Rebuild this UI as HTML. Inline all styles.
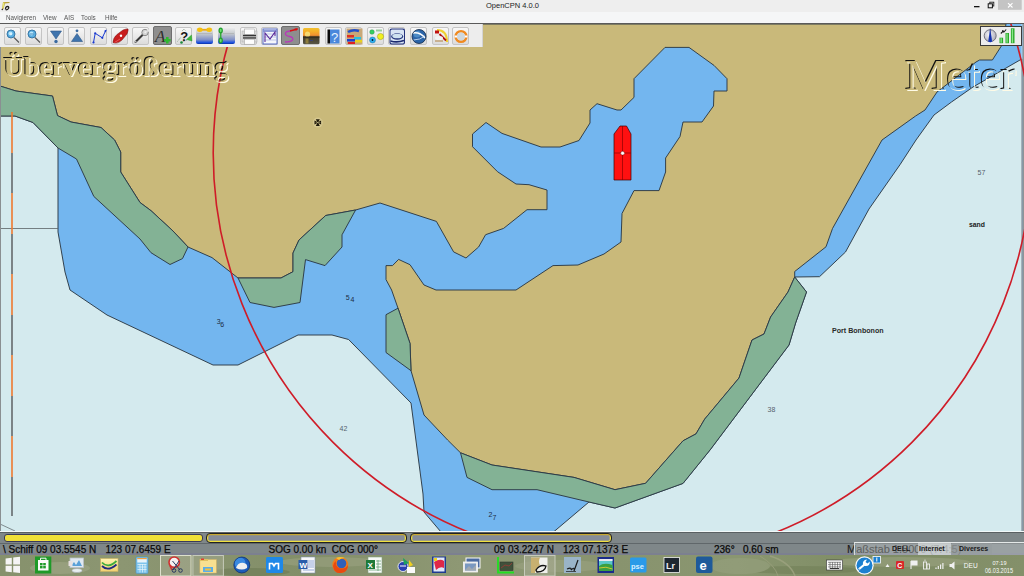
<!DOCTYPE html>
<html><head><meta charset="utf-8">
<style>
html,body{margin:0;padding:0;width:1024px;height:576px;overflow:hidden;background:#c9b97a;font-family:"Liberation Sans",sans-serif;}
#title{position:absolute;left:0;top:0;width:1024px;height:12px;background:#eeeeee;}
#title .t{position:absolute;left:486px;top:1px;font-size:7.5px;line-height:10px;color:#222;}
#menu{position:absolute;left:0;top:12px;width:1024px;height:11px;background:#f5f6f7;border-bottom:1px solid #5a5a5a;}
#menu span{position:absolute;top:1px;font-size:7px;line-height:10px;color:#555;transform:scaleX(0.9);transform-origin:0 0;}
#map{position:absolute;left:0;top:0;width:1024px;height:576px;}
#tb{position:absolute;left:0;top:24px;width:482.5px;height:23px;background:#ededed;border-right:1px solid #d4d4d4;box-sizing:border-box;}
.btn{position:absolute;top:3px;width:17px;height:17.5px;border:1px solid #c4c4c4;border-radius:2px;background:linear-gradient(#f8f8f8,#dcdcdc);box-sizing:border-box;}
.btn.on{background:#8e8e8e;border-color:#6e6e6e;}
.btn svg{position:absolute;left:0;top:0;}
#status{position:absolute;left:0;top:532px;width:1024px;height:23px;background:#7f8789;}
#taskbar{position:absolute;left:0;top:555px;width:1024px;height:21px;background:#7d8a62;}
.st{position:absolute;font-size:10px;line-height:12px;color:#0a0a0a;white-space:pre;-webkit-text-stroke:0.25px #0a0a0a;}
.bar{position:absolute;top:2.2px;height:8px;border:1px solid #333;border-radius:3px;box-sizing:border-box;}
.bar.ob{background:#868c98;border:none;box-shadow:inset 0 1.3px 0 #c8a830, inset 0 -1.3px 0 #f0e040, inset 1.3px 0 0 #e8d840, inset -1.3px 0 0 #e8d840;outline:0.6px solid #222;}
.lbl{font-family:"Liberation Sans",sans-serif;}
</style></head><body>
<svg id="map" width="1024" height="576" viewBox="0 0 1024 576">
  <rect x="0" y="24" width="1024" height="508" fill="#73b6ef"/>
  <g stroke="#2c3a46" stroke-width="0.95" stroke-linejoin="round">
  <!-- deep water left -->
  <polygon fill="#d4eaee" points="0,116 15,116 33,122.5 58,148 58,232 65,272 70,290 107,315 213,365 238,365 298,335 332,335 348.6,339.5 411,403 423,494 424,512 441,532 0,532"/>
  <!-- deep water right -->
  <polygon fill="#d4eaee" points="553.5,532 589,502 615,508 683,483.4 710,450 789,345 795.6,323 806.5,292 794.7,277 819.5,276.7 845.5,252 869,209 900,164.7 916,140 934,115 951.5,102 973,87 1020,60 1022,59 1022,532"/>
  <!-- land -->
  <polygon fill="#c9b97a" points="0,24 1006,24 1002,45 992.4,60 979.6,60 976,62 937,92 931,101 925,110 915.6,116 882,140 832.5,228.5 826,246.8 794.7,271.5 794.7,277 788,292 770.6,317 764,334 752,340 739,378 704.7,419.1 696,433.9 683,440.8 645.6,483.3 615,489.7 574,477.4 492,465 460.5,452.8 447.6,440 424,415 411,370.7 410,343.4 398,308.2 391.6,290 386,279.6 386,265.6 392.5,265.6 398.6,259.4 410,264.7 424,285 436,290 516,290 553,265.6 578,265 604,254 621,242 622,213.5 634,190.6 659,190.6 665.6,172 665.6,158 680,136.5 683,122 702,122 713.5,106 714,91 727,91 727,78.7 714,65.4 689,47.4 665,47.4 634,78.7 634,97.4 621,110 617,110 597,103.7 590,110 590,123 579,140.5 560,147 541,147 502,133.4 486,122.5 472.5,134 472.5,146.7 497.5,171.7 516,184 529,184.7 547,190 547,209.7 527,209.7 503.6,228.4 485.6,234.7 478.6,247 466,258 453.6,251.9 436.4,221.4 380,203 355.6,210 325.7,215.5 299,240 293,253 293,271.7 281,278 238,278 212,257.6 188,247 173,231 151,210.7 140,202.5 120.7,172 120.7,152 114.6,140 101,127.5 71,122 57.5,115.6 52.5,96 16,91 0,86"/>
  <!-- green -->
  <polygon fill="#83b295" points="0,86 16,91 52.5,96 57.5,115.6 71,122 101,127.5 114.6,140 120.7,152 120.7,172 140,202.5 151,210.7 173,231 188,247 182.5,258.6 170,264.5 151,252.7 140,239 93.8,196.4 76.5,159 58,148 33,122.5 15,116 0,116"/>
  <polygon fill="#83b295" points="355.6,210 325.7,215.5 299,240 293,253 293,271.7 281,278 238,278 250,302.5 274,307.4 300,302.5 305.5,259.6 325,265.6 342,247 342,234.8"/>
  <polygon fill="#83b295" points="386,314.7 398,308.2 410,343.4 411,370.7 386,352.5"/>
  <polygon fill="#83b295" points="794.7,277 806.5,292 795.6,323 789,345 710,450 683,483.4 615,508 589,502 537,489.7 492,489.7 467,477.4 460.5,452.8 492,465 574,477.4 615,489.7 645.6,483.3 683,440.8 696,433.9 704.7,419.1 739,378 752,340 764,334 770.6,317 788,292"/>
  </g>
  <!-- borders / lines -->
  <line x1="0" y1="228.5" x2="58" y2="228.5" stroke="#5c6366" stroke-width="0.8"/>
  <line x1="0" y1="524" x2="15" y2="531" stroke="#6a7276" stroke-width="0.8"/>
  <line x1="12" y1="112" x2="12" y2="516" stroke="#ee7a30" stroke-width="1.6" stroke-dasharray="41 40"/>
  <line x1="12" y1="153" x2="12" y2="516" stroke="#646a6c" stroke-width="1.6" stroke-dasharray="40 41"/>
  <rect x="0" y="24" width="1" height="508" fill="#8a8f92"/>
  <rect x="1021.5" y="24" width="1" height="508" fill="#eef6f8" opacity="0.6"/><rect x="1022.5" y="24" width="1.5" height="508" fill="#8e9496"/>
  <!-- red range circle -->
  <circle cx="622.5" cy="153" r="409.3" fill="none" stroke="#cf1c28" stroke-width="1.6"/>
  <!-- ship -->
  <g stroke="#400000" stroke-width="0.7">
    <polygon fill="#ff1010" points="620,126 626.5,126 631,134 631,180 614,180 614,134"/>
  </g>
  <line x1="622.5" y1="126" x2="622.5" y2="180" stroke="#7a0000" stroke-width="0.6"/>
  <line x1="614" y1="153" x2="631" y2="153" stroke="#7a0000" stroke-width="0.6"/>
  <circle cx="622.6" cy="153.2" r="1.9" fill="#fff" stroke="#500" stroke-width="0.4"/>
  <!-- soundings -->
  <g font-family="Liberation Sans" font-size="7">
    <text x="216.8" y="324.2" fill="#1c2c44">3</text><text x="220.3" y="326.6" fill="#1c2c44">6</text>
    <text x="345.8" y="300.2" fill="#1c2c44">5</text><text x="350.6" y="301.8" fill="#1c2c44">4</text>
    <text x="488.6" y="516.8" fill="#1c2c44">2</text><text x="492.6" y="519.6" fill="#1c2c44">7</text>
    <text x="339.6" y="431" fill="#56626c">42</text>
    <text x="767.6" y="412.2" fill="#56626c">38</text>
    <text x="977.6" y="174.8" fill="#56626c">57</text>
  </g>
  <text x="969" y="227" font-family="Liberation Sans" font-size="7" font-weight="bold" fill="#1a1a1a" textLength="16" lengthAdjust="spacingAndGlyphs">sand</text>
  <text x="832" y="333" font-family="Liberation Sans" font-size="7.1" font-weight="bold" fill="#2a2a2a">Port Bonbonon</text>
  <!-- cross symbol -->
  <circle cx="317.8" cy="122.6" r="5" fill="#f4ecc0" opacity="0.3"/>
  <g transform="translate(317.8,122.6)" fill="#1e1808">
    <path d="M-2,-3.3 L2,-3.3 L0.5,-0.5 L-0.5,-0.5 Z M-2,3.3 L2,3.3 L0.5,0.5 L-0.5,0.5 Z M-3.3,-2 L-3.3,2 L-0.5,0.5 L-0.5,-0.5 Z M3.3,-2 L3.3,2 L0.5,0.5 L0.5,-0.5 Z"/>
  </g>
  <line x1="315.5" y1="122.6" x2="320.5" y2="122.6" stroke="#e8e0b0" stroke-width="0.5" opacity="0.7"/>
  <!-- embossed texts -->
  <defs>
    <mask id="m1" maskUnits="userSpaceOnUse" x="0" y="24" width="1024" height="100">
      <rect x="0" y="24" width="1024" height="100" fill="#fff"/>
      <text x="3.5" y="76" font-family="Liberation Serif" font-weight="bold" font-size="28" fill="#000" textLength="225" lengthAdjust="spacingAndGlyphs">Übervergrößerung</text>
      <text x="905" y="89.5" font-family="Liberation Serif" font-size="44" fill="#000" textLength="111" lengthAdjust="spacingAndGlyphs">Meter</text>
    </mask>
  </defs>
  <g mask="url(#m1)">
    <text x="2.5" y="75" font-family="Liberation Serif" font-weight="bold" font-size="28" fill="#111" textLength="225" lengthAdjust="spacingAndGlyphs">Übervergrößerung</text>
    <text x="4.5" y="77" font-family="Liberation Serif" font-weight="bold" font-size="28" fill="#fffbe6" textLength="225" lengthAdjust="spacingAndGlyphs">Übervergrößerung</text>
    <text x="904" y="88.5" font-family="Liberation Serif" font-size="44" fill="#111" textLength="111" lengthAdjust="spacingAndGlyphs">Meter</text>
    <text x="906" y="90.5" font-family="Liberation Serif" font-size="44" fill="#fffbe6" textLength="111" lengthAdjust="spacingAndGlyphs">Meter</text>
  </g>
</svg>

<div id="title"><svg width="16" height="12" viewBox="0 0 16 12" style="position:absolute;left:0;top:0"><path d="M2,10 L3,2 L9.5,2 L9.5,3 L5,3.5 L3.5,9 Z" fill="#b8a040"/><path d="M2.5,8 L3,2.5 L4.5,2.5 L3.5,8 Z" fill="#e8e870"/><path d="M5.5,9.5 Q5.5,6.5 7.5,6.5 Q9.3,6.5 8.5,8.5 Q7.5,10 5.8,9.8" fill="none" stroke="#222" stroke-width="1.3"/><circle cx="2.3" cy="9.5" r="0.8" fill="#333"/></svg><span class="t">OpenCPN 4.0.0</span>
<svg width="60" height="12" viewBox="964 0 60 12" style="position:absolute;left:964px;top:0">
<rect x="974" y="6" width="5.5" height="1.3" fill="#111"/>
<rect x="989.8" y="2.2" width="4" height="3.8" fill="none" stroke="#222" stroke-width="0.9"/>
<rect x="988.2" y="3.8" width="4.2" height="4" fill="#eee" stroke="#111" stroke-width="1"/>
<rect x="998" y="0" width="23.7" height="9.8" fill="#c4c4c4"/>
<path d="M1008,3.2 L1012.5,7.5 M1012.5,3.2 L1008,7.5" stroke="#fff" stroke-width="1.1"/>
</svg></div>
<div id="menu">
  <span style="left:6px">Navigieren</span>
  <span style="left:43px">View</span>
  <span style="left:64px">AIS</span>
  <span style="left:81px">Tools</span>
  <span style="left:105px">Hilfe</span>
</div>

<div id="tb"><svg width="0" height="0" style="position:absolute"><defs><linearGradient id="gb" x1="0" y1="0" x2="0" y2="1"><stop offset="0" stop-color="#f2f2f2"/><stop offset="0.4" stop-color="#c4c8cc"/><stop offset="0.75" stop-color="#8090c8"/><stop offset="0.92" stop-color="#1a50e0"/><stop offset="1" stop-color="#0a30a0"/></linearGradient><linearGradient id="gs" x1="0" y1="0" x2="0" y2="1"><stop offset="0" stop-color="#f0c030"/><stop offset="0.2" stop-color="#f4b028"/><stop offset="0.45" stop-color="#f09030"/><stop offset="0.55" stop-color="#403a28"/><stop offset="1" stop-color="#5a5848"/></linearGradient></defs></svg>
<div class="btn" style="left:4px;"><svg width="17" height="17" viewBox="0 0 17 17"><circle cx="6" cy="6" r="4" fill="#5aaee0" stroke="#2f6f9f" stroke-width="0.9"/><circle cx="5.5" cy="5.5" r="2" fill="#b9e6fb"/><line x1="5" y1="6" x2="7" y2="6" stroke="#fff" stroke-width="0.9"/><line x1="9" y1="9.5" x2="14" y2="14.5" stroke="#555" stroke-width="1.1"/></svg></div>
<div class="btn" style="left:25.4px;"><svg width="17" height="17" viewBox="0 0 17 17"><circle cx="6" cy="6" r="4" fill="#5aaee0" stroke="#2f6f9f" stroke-width="0.9"/><circle cx="5.5" cy="5.5" r="2" fill="#b9e6fb"/><line x1="4" y1="6" x2="8" y2="6" stroke="#4a8fc0" stroke-width="1"/><line x1="9" y1="9.5" x2="14" y2="14.5" stroke="#555" stroke-width="1.1"/></svg></div>
<div class="btn" style="left:46.8px;"><svg width="17" height="17" viewBox="0 0 17 17"><polygon points="2.5,3 13.5,3 8,11" fill="#3f74ad" stroke="#2b5688" stroke-width="0.6"/><circle cx="8" cy="13.5" r="1.7" fill="#3a6aa0"/></svg></div>
<div class="btn" style="left:68.2px;"><svg width="17" height="17" viewBox="0 0 17 17"><polygon points="2.5,13.5 13.5,13.5 8,5.5" fill="#3f74ad" stroke="#2b5688" stroke-width="0.6"/><circle cx="8" cy="2.8" r="1.4" fill="#3a6aa0"/></svg></div>
<div class="btn" style="left:89.6px;"><svg width="17" height="17" viewBox="0 0 17 17"><polyline points="2.5,14.5 4.2,5.3 11.3,9.8 15,2" fill="none" stroke="#1a3ad0" stroke-width="1"/><circle cx="2.5" cy="14.5" r="1.1" fill="#1a3ad0"/><circle cx="4.2" cy="5.3" r="1.1" fill="#1a3ad0"/><circle cx="11.3" cy="9.8" r="1.1" fill="#1a3ad0"/><polygon points="15.5,1.5 13,3 15,4.5" fill="#1a3ad0"/></svg></div>
<div class="btn" style="left:111px;"><svg width="17" height="17" viewBox="0 0 17 17"><path d="M1,14.5 Q1,10 5,6.5 L11,2 Q15,0.5 16,1 Q16.5,2 15,6 L10,12 Q5,16.5 1,14.5 Z" fill="#c81d1d" stroke="#7a0c0c" stroke-width="0.5"/><path d="M2.5,14.5 Q5,13 8,11" stroke="#ff8080" stroke-width="0.6" fill="none"/><circle cx="9" cy="7.8" r="1.2" fill="#fff"/></svg></div>
<div class="btn" style="left:132.4px;"><svg width="17" height="17" viewBox="0 0 17 17"><line x1="2.5" y1="14" x2="10.5" y2="6" stroke="#383838" stroke-width="1.9" stroke-linecap="round"/><circle cx="2.8" cy="13.8" r="0.7" fill="#eee"/><circle cx="12" cy="4.5" r="3.2" fill="#d4d4d4" stroke="#6a6a6a" stroke-width="0.7"/><path d="M12.5,4 L15.5,1 L16.5,3.5 Z" fill="#e8e8e8"/><circle cx="12.3" cy="4.2" r="1" fill="#f0f0f0"/></svg></div>
<div class="btn on" style="left:153.2px;width:19px;top:2px;height:19px;"><svg width="17" height="17" viewBox="0 0 17 17"><text x="1" y="14.5" font-family="Liberation Serif" font-style="italic" font-size="17" fill="#2e2e2e">A</text><path d="M12,10 h2.6 v2 h2 v2.4 h-2 v2 h-2.6 v-2 h-2 v-2.4 h2 z" fill="#30b830"/></svg></div>
<div class="btn" style="left:175.4px;"><svg width="17" height="17" viewBox="0 0 17 17"><path d="M1.5,13.5 L5,9 M5,14.5 L11,12 M6,3 L8,1 L10,3" stroke="#5a7a5a" stroke-width="0.6" stroke-dasharray="1 0.8" fill="none"/><text x="4.2" y="13" font-family="Liberation Sans" font-weight="bold" font-size="13" fill="#141414">?</text><polygon points="10.5,11.5 15.5,7 16,13" fill="#3cbc3c" stroke="#208a20" stroke-width="0.4"/><circle cx="5.5" cy="14.5" r="1.3" fill="#1c8a3a"/></svg></div>
<div class="btn" style="left:196px;border:none;background:none;"><svg width="17" height="17" viewBox="0 0 17 17"><rect x="0" y="0" width="17" height="17" rx="2" fill="url(#gb)"/><path d="M1,6.5 h15" stroke="#9a9a9a" stroke-width="0.4"/><path d="M3,2.8 h11" stroke="#e8a820" stroke-width="1.8"/><ellipse cx="3.8" cy="2.8" rx="2.8" ry="2.2" fill="#f4c010"/><ellipse cx="13.2" cy="2.8" rx="2.8" ry="2.2" fill="#f4c010"/></svg></div>
<div class="btn" style="left:217.8px;border:none;background:none;"><svg width="17" height="17" viewBox="0 0 17 17"><rect x="0" y="0" width="17" height="17" rx="2" fill="url(#gb)"/><path d="M5,6.5 h11" stroke="#9a9a9a" stroke-width="0.4"/><path d="M2.7,3 v11" stroke="#3aa83a" stroke-width="1.5"/><ellipse cx="2.7" cy="3.5" rx="2.2" ry="3" fill="#22a030"/><ellipse cx="2.7" cy="13.5" rx="2.2" ry="3" fill="#22a030"/><ellipse cx="2.7" cy="3.5" rx="0.9" ry="1.8" fill="#70e070"/><ellipse cx="2.7" cy="13.5" rx="0.9" ry="1.8" fill="#70e070"/></svg></div>
<div class="btn" style="left:239.6px;"><svg width="17" height="17" viewBox="0 0 17 17"><rect x="1" y="3" width="15" height="11" fill="#d8d8d8" stroke="#aaa" stroke-width="0.5"/><rect x="3.5" y="1" width="10" height="5.5" fill="#fdfdfd" stroke="#999" stroke-width="0.5"/><rect x="2" y="6.8" width="13" height="1.5" fill="#333"/><rect x="2" y="9.2" width="13" height="1.5" fill="#444"/><rect x="3.5" y="11.2" width="10" height="5" fill="#fdfdfd" stroke="#999" stroke-width="0.5"/></svg></div>
<div class="btn" style="left:260.8px;"><svg width="17" height="17" viewBox="0 0 17 17"><rect x="1" y="1" width="14" height="15" fill="#f4f6fb" stroke="#4a5fc0" stroke-width="0.9"/><path d="M1.5,3 h13" stroke="#2a3fb0" stroke-width="1"/><path d="M2,6 h12 M2,9 h12 M2,12 h12" stroke="#9aa8d8" stroke-width="0.6"/><polyline points="3,14 3,5 8,11 13,4 13,8" fill="none" stroke="#5a2a9a" stroke-width="1.1"/></svg></div>
<div class="btn on" style="left:281px;width:19px;top:2px;height:19px;"><svg width="17" height="17" viewBox="0 0 17 17"><path d="M9,4 C2,4 1.5,8.5 7.5,9.5 C13,10.5 12,15 3,15" fill="none" stroke="#b838b8" stroke-width="1.3"/><path d="M8,4 L15.5,2" stroke="#d81010" stroke-width="1.5"/><polygon points="16,1.5 12.5,1.5 14,4" fill="#d81010"/></svg></div>
<div class="btn" style="left:303px;border:none;background:none;top:3.5px"><svg width="17" height="17" viewBox="0 0 17 17"><rect x="0" y="0" width="16.5" height="16.3" rx="1.5" fill="url(#gs)"/><circle cx="4.5" cy="6.2" r="2.6" fill="#f8e880" opacity="0.8"/><rect x="0" y="8.5" width="16.5" height="1.2" fill="#2a2418" opacity="0.7"/><rect x="2.5" y="10.5" width="3" height="5" fill="#b8a040" opacity="0.6"/><rect x="7" y="12" width="3" height="1" fill="#3040a0" opacity="0.6"/></svg></div>
<div class="btn" style="left:324.5px;"><svg width="17" height="17" viewBox="0 0 17 17"><rect x="1.5" y="1.5" width="2.5" height="14" fill="#0a0a0a"/><rect x="4" y="1.5" width="9.5" height="14" fill="#4a88dc"/><text x="5" y="13.8" font-family="Liberation Sans" font-size="13" fill="#e8f4ff">?</text></svg></div>
<div class="btn" style="left:345.3px;"><svg width="17" height="17" viewBox="0 0 17 17"><rect x="0.5" y="0.5" width="16" height="16" fill="#c8a878"/><path d="M2,4 Q7,1 13,3" stroke="#2450c8" stroke-width="2.5" fill="none"/><rect x="1" y="7" width="7" height="2.5" fill="#e03020"/><rect x="8" y="9" width="7" height="2.5" fill="#28c0e0"/><rect x="1" y="11" width="8" height="2.5" fill="#1a40d0"/><rect x="9" y="12" width="7" height="2.5" fill="#e8d020"/><rect x="2" y="14" width="7" height="2" fill="#e02020"/></svg></div>
<div class="btn" style="left:367.2px;"><svg width="17" height="17" viewBox="0 0 17 17"><circle cx="4" cy="4" r="2.3" fill="#35d060" stroke="#208040" stroke-width="0.4"/><circle cx="12.5" cy="8.5" r="3.1" fill="#f0f020" stroke="#808000" stroke-width="0.4"/><circle cx="4.5" cy="12" r="3" fill="#30b0f0" stroke="#106090" stroke-width="0.4"/><circle cx="4.5" cy="12" r="0.9" fill="#012"/><rect x="8" y="1.5" width="6" height="2" fill="#9c9"/></svg></div>
<div class="btn" style="left:388.3px;"><svg width="17" height="17" viewBox="0 0 17 17"><rect x="0.5" y="0.5" width="15.5" height="16" rx="2" fill="#24327c"/><rect x="1.5" y="1.5" width="13.5" height="14" rx="1.5" fill="#d8e4f4"/><ellipse cx="8.2" cy="8.5" rx="6" ry="3.2" fill="#25357c"/><ellipse cx="8.2" cy="8" rx="5" ry="2.3" fill="#cfe2f0"/><path d="M1.5,13 Q8,15 15,12.5" stroke="#1c2a70" stroke-width="1.6" fill="none"/></svg></div>
<div class="btn" style="left:410.2px;"><svg width="17" height="17" viewBox="0 0 17 17"><circle cx="8" cy="8.5" r="7" fill="#2a64a8"/><circle cx="6" cy="6" r="3.5" fill="#5a9ad0" opacity="0.7"/><path d="M2,5 Q9,4 14,10" stroke="#fff" stroke-width="1.5" fill="none"/><path d="M2.5,12 Q9,12 14,8" stroke="#d8e8f8" stroke-width="0.8" fill="none"/><circle cx="8" cy="8.5" r="7" fill="none" stroke="#102848" stroke-width="0.8"/></svg></div>
<div class="btn" style="left:431.7px;"><svg width="17" height="17" viewBox="0 0 17 17"><path d="M4,2 Q14,2 14,14" stroke="#f0d030" stroke-width="2" fill="none"/><rect x="2" y="2.5" width="4" height="3" fill="#c01010"/><path d="M6.5,6 L13,12.5" stroke="#b01010" stroke-width="1.8"/><path d="M2,13 h8" stroke="#b08040" stroke-width="1" /><ellipse cx="6" cy="10" rx="4" ry="2" fill="#f0f4f4"/></svg></div>
<div class="btn" style="left:452.4px;"><svg width="17" height="17" viewBox="0 0 17 17"><circle cx="8" cy="8.5" r="5.3" fill="none" stroke="#f08a20" stroke-width="2.6"/><circle cx="8" cy="8.5" r="3.9" fill="#cfd8de"/><path d="M1.5,8.5 h2.6 M11.9,8.5 h2.6" stroke="#fff" stroke-width="1.8"/></svg></div>
</div>

<div id="cw" style="position:absolute;left:979.5px;top:25.5px;width:42px;height:20px;box-sizing:border-box;border:1px solid #3a3a3a;background:#ededed;">
<svg width="40" height="18" viewBox="0 0 40 18" style="position:absolute;left:0;top:0">
<defs><radialGradient id="cg" cx="0.4" cy="0.4" r="0.7"><stop offset="0" stop-color="#f4f4f8"/><stop offset="1" stop-color="#a8a8b4"/></radialGradient></defs>
<circle cx="9.2" cy="8.7" r="6" fill="url(#cg)" stroke="#5a5a6a" stroke-width="0.8"/>
<path d="M9.2,1.5 L11.2,14.5 Q9.2,16 7.2,14.5 Z" fill="#1a3cc0"/>
<path d="M9.2,1.5 L9.2,15" stroke="#0a1a6a" stroke-width="0.4"/>
<rect x="18.5" y="10.7" width="3.6" height="5.5" fill="#2aa82a"/>
<rect x="24.5" y="6" width="3.5" height="10.2" fill="#2aa82a"/>
<rect x="29.9" y="1.3" width="3.6" height="14.9" fill="#2aa82a"/>
<rect x="19.5" y="11.2" width="1.3" height="4.5" fill="#8ae88a"/><rect x="25.4" y="6.5" width="1.3" height="9.2" fill="#8ae88a"/><rect x="30.8" y="1.8" width="1.3" height="14" fill="#8ae88a"/>
<path d="M19.8,6.5 L22.5,3.8 M22.5,3.8 L21,3.8 M22.5,3.8 L22.5,5.3 M25.2,2.5 L22.5,5.5" stroke="#1a1a1a" stroke-width="1.1" fill="none"/>
</svg></div>
<div id="status">
  <div style="position:absolute;left:0;top:-1px;width:1024px;height:1px;background:#f2f8f8"></div><div style="position:absolute;left:0;top:0;width:1024px;height:1.2px;background:#5a6062"></div>
  <div style="position:absolute;left:0;top:10.5px;width:1024px;height:1px;background:#60676a"></div><div style="position:absolute;left:0;top:20.5px;width:1024px;height:2px;background:#7c8090"></div>
  <div class="bar" style="left:3.5px;width:199.5px;background:#f0e038;border-color:#3a3a5a;"></div>
  <div class="bar ob" style="left:207px;width:199px;"></div>
  <div class="bar ob" style="left:411px;width:199.5px;"></div>
  <span class="st" style="left:3px;top:11.5px">\ Schiff 09 03.5545 N</span>
  <span class="st" style="left:105.5px;top:11.5px">123 07.6459 E</span>
  <span class="st" style="left:268.5px;top:11.5px">SOG 0.00 kn  COG 000°</span>
  <span class="st" style="left:494px;top:11.5px">09 03.2247 N</span>
  <span class="st" style="left:563px;top:11.5px">123 07.1373 E</span>
  <span class="st" style="left:714px;top:11.5px">236°   0.60 sm</span>
  <span class="st" style="left:847px;top:10.5px;font-size:11px;color:#1a1a1a;-webkit-text-stroke:0.1px #1a1a1a">Maßstab 1:5000 (7:4:5)</span>
</div>
<div style="position:absolute;left:854px;top:542px;width:170px;height:12.5px;background:rgba(200,206,206,0.38);border-top:1px solid #e4e8e8;border-left:1px solid #d8dcdc;box-sizing:border-box;">
<span style="position:absolute;left:37px;top:0.5px;font-size:7px;line-height:10px;font-weight:bold;color:#1a1a1a">DELL</span>
<div style="position:absolute;left:63px;top:0;width:33px;height:11.5px;background:rgba(236,240,240,0.55)"></div>
<span style="position:absolute;left:64px;top:0.5px;font-size:7px;line-height:10px;font-weight:bold;color:#1a1a1a">Internet</span>
<div style="position:absolute;left:97px;top:0;width:40px;height:11.5px;background:rgba(150,156,158,0.6)"></div>
<span style="position:absolute;left:104px;top:0.5px;font-size:7px;line-height:10px;font-weight:bold;color:#1a1a1a">Diverses</span>
</div>
<div id="taskbar">
<svg width="1024" height="21" viewBox="0 555 1024 21" style="position:absolute;left:0;top:0">
<defs>
<linearGradient id="tbg" x1="0" y1="0" x2="1" y2="0">
<stop offset="0" stop-color="#86916c"/><stop offset="0.12" stop-color="#8c9672"/><stop offset="0.3" stop-color="#828e68"/><stop offset="0.45" stop-color="#8e9874"/><stop offset="0.6" stop-color="#88936e"/><stop offset="0.72" stop-color="#8a9670"/><stop offset="0.85" stop-color="#7e8c64"/><stop offset="1" stop-color="#84906a"/>
</linearGradient>
<linearGradient id="gfold" x1="0" y1="0" x2="0" y2="1"><stop offset="0" stop-color="#fff3b0"/><stop offset="1" stop-color="#f0d070"/></linearGradient>
</defs>
<rect x="0" y="555" width="1024" height="21" fill="url(#tbg)"/>
<g opacity="0.45">
<ellipse cx="60" cy="568" rx="30" ry="6" fill="#a8ae90"/><ellipse cx="250" cy="572" rx="40" ry="4" fill="#66744e"/>
<ellipse cx="330" cy="562" rx="50" ry="5" fill="#a2a888"/><ellipse cx="560" cy="566" rx="45" ry="6" fill="#a0a686"/>
<ellipse cx="800" cy="570" rx="60" ry="4" fill="#6c7a52"/><ellipse cx="900" cy="562" rx="70" ry="5" fill="#a4aa8a"/>
<path d="M770,556 Q790,562 795,576" stroke="#b0b090" stroke-width="1.5" fill="none"/><path d="M760,556 Q775,565 778,576" stroke="#a8a888" stroke-width="1" fill="none"/>
<ellipse cx="740" cy="566" rx="30" ry="8" fill="#9aa482"/>
</g>
<!-- highlighted buttons -->
<rect x="160.5" y="555.5" width="30.5" height="20.5" fill="#a8ac94" fill-opacity="0.55" stroke="#dde0cc" stroke-width="1"/>
<rect x="192.9" y="555.5" width="30.5" height="20.5" fill="#a8ac94" fill-opacity="0.45" stroke="#c6caba" stroke-width="1"/>
<rect x="524.5" y="555.5" width="30.5" height="20.5" fill="#a8ac94" fill-opacity="0.55" stroke="#c6caba" stroke-width="1"/>
<!-- windows -->
<path d="M5.6,558.6 L11.8,557.8 L11.8,564.5 L5.6,564.5 Z M13.2,557.6 L20,556.8 L20,564.5 L13.2,564.5 Z M5.6,565.7 L11.8,565.7 L11.8,572.2 L5.6,571.4 Z M13.2,565.7 L20,565.7 L20,573 L13.2,572.3 Z" fill="#f4f4f4"/>
<!-- store -->
<rect x="35" y="556.5" width="16.3" height="17" fill="#1e9a28"/>
<path d="M38,560 h10.5 v10.5 h-10.5 z" fill="#fafafa"/><path d="M40.5,560 v-1.8 h5.5 v1.8" fill="none" stroke="#fafafa" stroke-width="1"/>
<rect x="40" y="563" width="2.6" height="2.4" fill="#1e9a28"/><rect x="43.2" y="563" width="2.6" height="2.4" fill="#1e9a28"/><rect x="40" y="566" width="2.6" height="2.4" fill="#1e9a28"/><rect x="43.2" y="566" width="2.6" height="2.4" fill="#1e9a28"/>
<!-- photo viewer -->
<rect x="70" y="558" width="13.5" height="9.5" fill="#dfe8f0" stroke="#b8c0c8" stroke-width="0.8"/><path d="M71,566 L74,562 L76,565 L79,560 L82,566 Z" fill="#5aa0d8"/><ellipse cx="77" cy="570.5" rx="5" ry="2" fill="#e8eef0" stroke="#a0a8b0" stroke-width="0.6"/><rect x="68.5" y="561" width="4" height="5" fill="#e8e0e0"/>
<!-- folder swoosh -->
<rect x="100.6" y="558.5" width="17.4" height="13" fill="url(#gfold)" stroke="#c8b060" stroke-width="0.6"/>
<path d="M102,562.5 Q108,569 116.5,561" stroke="#3cac3c" stroke-width="1.8" fill="none"/><path d="M102,566 Q108,572 116.5,564.5" stroke="#202a80" stroke-width="1.8" fill="none"/>
<!-- calculator -->
<rect x="136" y="557" width="12" height="16.4" rx="1" fill="#7ec4ec" stroke="#4a90c0" stroke-width="0.6"/><rect x="137.3" y="558.5" width="9.4" height="4" fill="#e8f4fc"/><rect x="137.2" y="558" width="9.6" height="1.2" fill="#f0a040"/>
<path d="M137.5,564.5 h9 M137.5,567 h9 M137.5,569.5 h9 M140,564 v8.5 M142.5,564 v8.5 M145,564 v8.5" stroke="#e8f6fc" stroke-width="0.7"/>
<!-- snipping -->
<circle cx="174.2" cy="562.2" r="5.2" fill="#f4f0f0" stroke="#d03030" stroke-width="1.6"/><path d="M170,566 L172,570" stroke="#d03030" stroke-width="1.5"/>
<path d="M172.5,561 L180,570 M179,561 L173,570" stroke="#2a3a60" stroke-width="1"/><circle cx="174" cy="570.5" r="1.8" fill="none" stroke="#2a3a60" stroke-width="1"/><circle cx="180.5" cy="570.5" r="1.8" fill="none" stroke="#2a3a60" stroke-width="1"/>
<!-- explorer -->
<rect x="199.9" y="559.5" width="16.5" height="13.5" fill="#f8e090" stroke="#d0b060" stroke-width="0.5"/><rect x="200" y="559" width="8" height="2" fill="#e0c060"/><rect x="201" y="558.5" width="3" height="1.5" fill="#e04030"/><rect x="203" y="567" width="10" height="5" fill="#5aaee8"/><rect x="205" y="568.5" width="6" height="2" fill="#f0c040"/>
<!-- thunderbird -->
<circle cx="241.8" cy="565" r="8" fill="#1c5cb8"/><circle cx="240" cy="563" r="5.5" fill="#3a8ae0"/><path d="M236,568 Q238,562 244,563 Q248,564 247,568 Q242,571 236,568 Z" fill="#f0f0f0"/><circle cx="241.8" cy="565" r="8" fill="none" stroke="#0c2c70" stroke-width="0.7"/>
<!-- maxthon -->
<rect x="266" y="557" width="17" height="16" rx="1.5" fill="#1e88e8"/><path d="M269.5,569.5 v-6 h3 l1.5,2.5 l1.5,-2.5 h3 v6" fill="none" stroke="#fff" stroke-width="1.6"/>
<!-- word -->
<rect x="301" y="557" width="14" height="16" fill="#f8f8fa" stroke="#8090b0" stroke-width="0.6"/><rect x="298.5" y="560" width="9" height="9" fill="#2a5caa"/><text x="299.5" y="567.8" font-family="Liberation Sans" font-size="8" font-weight="bold" fill="#fff">W</text><path d="M308,561 h6 M308,563 h6 M308,565 h6 M308,567 h6 M303,570 h11" stroke="#6a8ac8" stroke-width="0.7"/>
<!-- firefox -->
<circle cx="340.3" cy="565" r="8" fill="#f07a18"/><circle cx="341.5" cy="563.5" r="4.8" fill="#3060b8"/><path d="M333,566 Q334,574 341,573 Q348,572 348,565 Q345,570 339,568 Q335,566 336,561 Q333,563 333,566 Z" fill="#e84a10"/><path d="M336,558 Q340,556 345,558 Q341,558 339,560 Z" fill="#f8c030"/>
<!-- excel -->
<rect x="368" y="557" width="14" height="16" fill="#f8faf8" stroke="#80a080" stroke-width="0.6"/><rect x="366" y="560" width="9" height="9" fill="#1e7a3a"/><text x="367.5" y="567.8" font-family="Liberation Sans" font-size="8" font-weight="bold" fill="#fff">X</text><path d="M376,561 h5 M376,564 h5 M376,567 h5 M369,570 h12 M378,560 v11" stroke="#5a9a6a" stroke-width="0.7"/>
<!-- app blue circle -->
<circle cx="403" cy="566.5" r="5" fill="#2a40b0" stroke="#fff" stroke-width="0.8"/><path d="M403,558 L409,563 L404,565 Z" fill="#20a060"/><path d="M409,560 L413,565 L409,567 Z" fill="#f0d020"/><rect x="407" y="567" width="8" height="6" fill="#fafafa"/><path d="M400,566 h6" stroke="#fff" stroke-width="1"/>
<!-- flag book -->
<rect x="432" y="556.5" width="14" height="16.5" fill="#203a90"/><rect x="433.5" y="557.5" width="11" height="14" fill="#e0e8f8"/><path d="M434,562 Q440,558 444,561 L444,568 Q440,566 436,570 Z" fill="#e02848"/><rect x="434" y="558" width="3" height="3" fill="#f0d020"/>
<!-- photos -->
<rect x="466" y="558" width="14" height="10" fill="#4a6aa0" stroke="#fafafa" stroke-width="1"/><rect x="463.5" y="562" width="14" height="10" fill="#e8e8e8" stroke="#f8f8f8" stroke-width="0.8"/><rect x="465" y="563.5" width="11" height="7" fill="#7a98c0"/><path d="M465,570 L469,566 L472,569 L476,565 v5.5 h-11 z" fill="#a0a8b0"/>
<!-- green frame -->
<path d="M498,557 v15.5 h16" fill="none" stroke="#20e020" stroke-width="1.8"/><rect x="500" y="562" width="13" height="8.5" fill="#40503a" stroke="#303a30" stroke-width="0.6"/><path d="M501,568 L505,565 L509,566 L512,563" stroke="#c03030" stroke-width="0.6" fill="none"/>
<!-- opencpn -->
<rect x="531" y="557.5" width="16.5" height="15.5" fill="#f0f0ec"/><path d="M531,557.5 h9 Q538,562 540,565 Q536,568 535,573 h-4 Z" fill="#c8b070"/><path d="M536,570 Q540,564 546,566 Q545,572 537,572 Z" fill="none" stroke="#111" stroke-width="1.3"/>
<!-- signature -->
<rect x="564" y="557" width="17" height="16" fill="#9ab4c8"/><path d="M567,569 Q572,567 571,570 Q575,566 574,571 L578,560" stroke="#1a1a1a" stroke-width="1.2" fill="none"/><path d="M566,571.5 h10" stroke="#1a1a1a" stroke-width="0.7"/>
<!-- chart image -->
<rect x="597.5" y="557" width="16.5" height="16" fill="#1a2a8a"/><rect x="599" y="559" width="13.5" height="12" fill="#5ac8c8"/><path d="M599,566 Q604,562 612.5,565 V571 H599 Z" fill="#3aa040"/><path d="M599,568 Q606,566 612.5,569" stroke="#f0d030" stroke-width="0.8" fill="none"/><rect x="599" y="559" width="13.5" height="2" fill="#e8e8f0"/>
<!-- pse -->
<rect x="630" y="557.5" width="16.5" height="15" rx="1.5" fill="#2a9ae8"/><text x="631" y="568.5" font-family="Liberation Sans" font-weight="bold" font-size="7.5" fill="#d8f0ff">pse</text>
<!-- Lr -->
<rect x="664" y="557.5" width="15.5" height="15" fill="#1e2630" stroke="#f0f0f0" stroke-width="0.8"/><text x="666" y="569" font-family="Liberation Sans" font-weight="bold" font-size="9" fill="#f0f0f0">Lr</text>
<!-- e -->
<rect x="696" y="556.5" width="16.5" height="16.5" rx="2" fill="#1e5a9a"/><text x="699.5" y="570" font-family="Liberation Sans" font-weight="bold" font-size="13" fill="#fff">e</text>
<!-- tray -->
<rect x="826.5" y="560" width="16" height="10" fill="#fafafa" stroke="#333" stroke-width="0.6"/><path d="M828,562.3 h13 M828,564.6 h13 M828,566.9 h13 M830,562 v7 M832.5,562 v7 M835,562 v7 M837.5,562 v7 M840,562 v7" stroke="#555" stroke-width="0.6"/><path d="M830,568.5 h9" stroke="#333" stroke-width="1"/>
<circle cx="864.5" cy="565.5" r="9.2" fill="#fafafa"/><circle cx="864.5" cy="565.5" r="8" fill="#1c80d0"/><path d="M858.5,569.5 L864.5,564.5" stroke="#fff" stroke-width="2.2" stroke-linecap="round"/><path d="M863,565 Q862,560 867,559.5 L865.5,562 L867.5,563.5 L869.8,561.5 Q870,566.5 865,566 Z" fill="#fff"/><circle cx="858.8" cy="569.3" r="0.8" fill="#1c80d0"/>
<rect x="873" y="556.5" width="7.5" height="6.5" fill="#1c80d0" stroke="#fff" stroke-width="0.8"/><path d="M876.8,557.5 v4" stroke="#fff" stroke-width="1"/>
<path d="M885.5,567 L887.5,564 L889.5,567 Z" fill="#f4f4f4"/>
<rect x="896" y="561" width="8" height="8" rx="1" fill="#d82828"/><text x="897.3" y="567.6" font-family="Liberation Sans" font-weight="bold" font-size="7" fill="#fff">C</text>
<path d="M911,569 v-8 M911,561 h6 v4 h-6" stroke="#f0f0f0" stroke-width="1.1" fill="#f0f0f0"/>
<rect x="923.5" y="562" width="3" height="7" fill="none" stroke="#eee" stroke-width="0.9"/><rect x="927" y="564" width="2.5" height="5" fill="none" stroke="#eee" stroke-width="0.9"/><path d="M925,561 v-1.5" stroke="#eee" stroke-width="0.8"/>
<path d="M936,569 v-1.5 M938.3,569 v-3 M940.6,569 v-4.5 M942.9,569 v-6" stroke="#f0f0f0" stroke-width="1.2"/>
<path d="M949.5,564 h2 l3,-2.5 v8 l-3,-2.5 h-2 z" fill="#f0f0f0"/>
<text x="963.8" y="568" font-family="Liberation Sans" font-size="6.6" fill="#fafafa">DEU</text>
<text x="992.5" y="564.5" font-family="Liberation Sans" font-size="6.2" fill="#fafafa" textLength="14" lengthAdjust="spacingAndGlyphs">07:19</text>
<text x="985" y="573" font-family="Liberation Sans" font-size="6.4" fill="#fafafa" textLength="28" lengthAdjust="spacingAndGlyphs">06.03.2015</text>
</svg>
</div>
</body></html>
